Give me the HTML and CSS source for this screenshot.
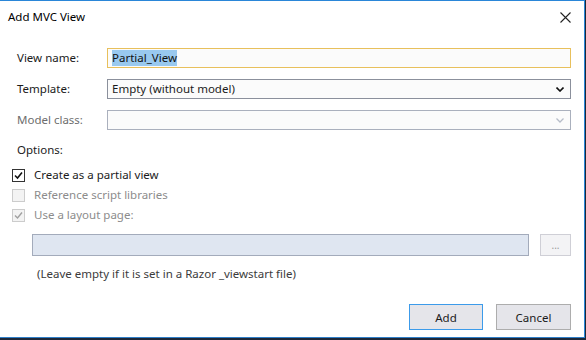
FILE: index.html
```html
<!DOCTYPE html>
<html>
<head>
<meta charset="utf-8">
<link rel="stylesheet" href="styles.css">
</head>
<body>
<div class="dialog">
  <div class="titlebar">
    <span class="title">Add MVC View</span>
    <svg class="close" width="11" height="11" viewBox="0 0 11 11"><path d="M0.5 0.5L10.5 10.5M10.5 0.5L0.5 10.5" stroke="#222" stroke-width="1.1" fill="none"/></svg>
  </div>
  <div class="form">
    <div class="row">
      <label class="lbl">View name:</label>
      <div class="field focus"><span class="sel">Partial_View</span></div>
    </div>
    <div class="row">
      <label class="lbl">Template:</label>
      <div class="field combo"><span>Empty (without model)</span>
        <svg class="chev" width="8" height="5" viewBox="0 0 8 5"><path d="M0.5 0.5L4 4L7.5 0.5" stroke="#111" stroke-width="1.6" fill="none"/></svg>
      </div>
    </div>
    <div class="row">
      <label class="lbl dis">Model class:</label>
      <div class="field combo disabled"><span></span>
        <svg class="chev" width="8" height="5" viewBox="0 0 8 5"><path d="M0.5 0.5L4 4L7.5 0.5" stroke="#b6bcc8" stroke-width="1.3" fill="none"/></svg>
      </div>
    </div>
    <div class="options">Options:</div>
    <div class="checks">
      <div class="chk"><span class="box on"><svg width="11" height="11" viewBox="0 0 11 11"><path d="M2 5.5L4.5 8L9 2.5" stroke="#111" stroke-width="1.6" fill="none"/></svg></span><span class="ctext">Create as a partial view</span></div>
      <div class="chk"><span class="box off"></span><span class="ctext dis2">Reference script libraries</span></div>
      <div class="chk"><span class="box off"><svg width="11" height="11" viewBox="0 0 11 11"><path d="M2 5.5L4.5 8L9 2.5" stroke="#a0a0a0" stroke-width="1.4" fill="none"/></svg></span><span class="ctext dis2">Use a layout page:</span></div>
    </div>
    <div class="pathrow">
      <div class="path"></div>
      <div class="browse">...</div>
    </div>
    <div class="hint">(Leave empty if it is set in a Razor _viewstart file)</div>
    <div class="buttons">
      <button class="btn def">Add</button>
      <button class="btn">Cancel</button>
    </div>
  </div>
</div>
</body>
</html>
```
FILE: styles.css
```css
html, body {
  margin: 0;
  padding: 0;
  background: #1d2838;
  width: 586px;
  height: 340px;
  overflow: hidden;
}
.dialog {
  box-sizing: border-box;
  width: 585px;
  height: 338px;
  background: #fff;
  border-top: 1px solid #2a86d8;
  border-right: 1px solid #2a86d8;
  border-bottom: 1px solid #2f7fc8;
  font-family: "Noto Sans", "Open Sans", sans-serif;
  font-size: 11.5px;
  color: #1b1b1b;
}
.titlebar {
  height: 47px;
  display: flex;
  align-items: flex-start;
  justify-content: space-between;
  padding: 8px 13px 0 8px;
  box-sizing: border-box;
}
.title {
  line-height: 16px;
  color: #000;
}
.close {
  margin-top: 3px;
}
.form {
  padding: 0 13px 0 17px;
}
.row {
  display: flex;
  align-items: center;
  height: 20px;
  margin-bottom: 11px;
}
.row:nth-child(3) { margin-bottom: 0; }
.lbl {
  width: 90px;
  flex: none;
  line-height: 16px;
}
.lbl.dis { color: #6d6d6d; }
.field {
  flex: 1;
  height: 20px;
  box-sizing: border-box;
  border: 1px solid #8b909c;
  background: #fbfbfb;
  display: flex;
  align-items: center;
  padding-left: 4px;
  line-height: 16px;
}
.field.focus { border-color: #e8c05c; }
.field.disabled { border-color: #aab0bd; }
.sel {
  background: #99c9ef;
  color: #111;
}
.combo {
  justify-content: space-between;
  padding-right: 6px;
}
.options {
  margin-top: 12px;
  line-height: 16px;
}
.checks {
  margin-top: 7px;
  margin-left: -5px;
}
.chk {
  height: 20px;
  display: flex;
  align-items: center;
}
.box {
  width: 13px;
  height: 13px;
  box-sizing: border-box;
  border: 1px solid #333;
  background: #fff;
  display: flex;
  align-items: center;
  justify-content: center;
  margin-right: 9px;
}
.box svg { display: block; }
.box.off {
  border-color: #cccccc;
  background: #f3f3f3;
}
.ctext { line-height: 16px; }
.dis2 { color: #8c8c8c; }
.pathrow {
  margin-top: 9px;
  margin-left: 15px;
  display: flex;
  height: 22px;
}
.path {
  flex: 1;
  box-sizing: border-box;
  border: 1px solid #a3abbb;
  background: #dfe6f1;
}
.browse {
  width: 31px;
  margin-left: 11px;
  box-sizing: border-box;
  border: 1px solid #cfcfd6;
  background: #f3f3f5;
  color: #9a9a9a;
  font-size: 10px;
  display: flex;
  align-items: center;
  justify-content: center;
}
.hint {
  margin-top: 10px;
  margin-left: 20px;
  line-height: 16px;
  color: #3b3b3b;
}
.buttons {
  margin-top: 22px;
  display: flex;
  justify-content: flex-end;
  gap: 13px;
}
.btn {
  width: 75px;
  height: 26px;
  box-sizing: border-box;
  border: 1px solid #adadad;
  background: #e5e5ea;
  font-family: "Noto Sans", "Open Sans", sans-serif;
  font-size: 11.5px;
  color: #1b1b1b;
  padding: 0;
}
.btn.def {
  width: 74px;
  border-color: #3c9bea;
}
```
